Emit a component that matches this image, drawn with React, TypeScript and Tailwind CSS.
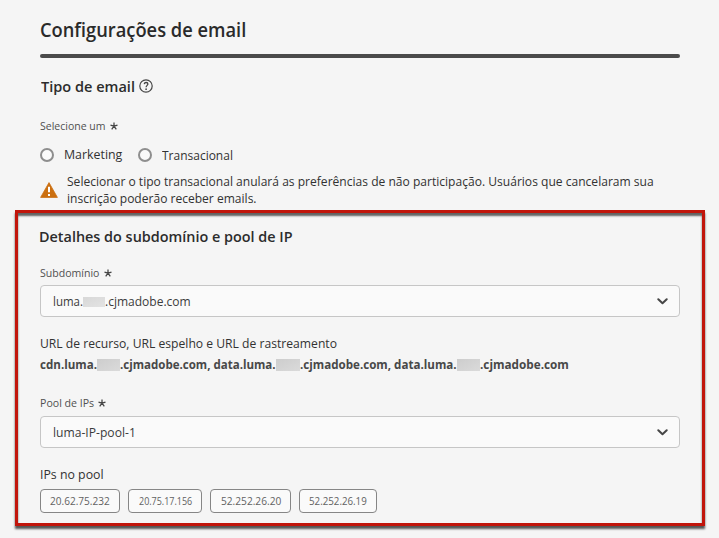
import { useLayoutEffect, useRef } from "react";
import clsx from "clsx";

/** A run of text condensed or widened to an exact advance width. */
function Fit({ w, className, children }: { w: number; className?: string; children: string }) {
  const ref = useRef<HTMLSpanElement>(null);
  useLayoutEffect(() => {
    const el = ref.current;
    if (el) el.style.transform = `scaleX(${w / el.offsetWidth})`;
  }, [w, children]);
  return (
    <span className={clsx("block shrink-0 whitespace-nowrap", className)} style={{ width: w }}>
      <span ref={ref} className="inline-block origin-left">
        {children}
      </span>
    </span>
  );
}

function Asterisk() {
  return (
    <svg className="ml-1 size-2 shrink-0" viewBox="0 0 8 8" fill="none" stroke="#444" strokeWidth="1.25">
      <path d="M4 4.2V.4M4 4.2L.5 3.1M4 4.2L7.5 3.1M4 4.2L1.7 7.4M4 4.2L6.3 7.4" />
    </svg>
  );
}

function Label({ text, w, className }: { text: string; w: number; className?: string }) {
  return (
    <div className={clsx("flex items-center text-[11px] leading-4 text-[#505050]", className)}>
      <Fit w={w}>{text}</Fit>
      <Asterisk />
    </div>
  );
}

function Radio({ text, w, className, textClass }: { text: string; w: number; className?: string; textClass?: string }) {
  return (
    <label className={clsx("flex items-center", className)}>
      <span className="mr-[10px] size-[14px] rounded-full border-2 border-[#8e8e8e] bg-[#fafafa]" />
      <Fit w={w} className={textClass}>{text}</Fit>
    </label>
  );
}

function Redacted({ className }: { className: string }) {
  return <span className={clsx("mt-px shrink-0 bg-linear-to-br", className)} />;
}

function Select({ children, className }: { children: React.ReactNode; className?: string }) {
  return (
    <div
      className={clsx(
        "flex h-8 items-center rounded-[4px] border border-[#c6c6c6] bg-[#fafafa] pr-[11px] pl-3 leading-5 text-[#3c3c3c]",
        className,
      )}
    >
      {children}
      <svg className="ml-auto h-[7px] w-[11px]" viewBox="0 0 11 7" fill="none" stroke="#464646" strokeWidth="2" strokeLinecap="round" strokeLinejoin="round">
        <path d="M1.3 1.2L5.5 5.2L9.7 1.2" />
      </svg>
    </div>
  );
}

const ips = [
  { ip: "20.62.75.232", w: 59.5, box: "w-20" },
  { ip: "20.75.17.156", w: 53, box: "w-[74px]" },
  { ip: "52.252.26.20", w: 60, box: "w-[81px]" },
  { ip: "52.252.26.19", w: 57.5, box: "w-[78px]" },
];

export default function App() {
  return (
    <main className="h-[538px] w-[719px] overflow-hidden bg-[#f5f5f5] pt-4 font-['Open_Sans',sans-serif] text-[13px] text-[#323232]">
      <div className="mx-10 w-[640px]">
        <h1 className="text-[19px] leading-7 font-semibold text-[#2a2a2a]">
          <Fit w={206}>Configurações de email</Fit>
        </h1>
        <div className="mt-[10px] h-1 rounded-full bg-[#4b4b4b]" />
        <h2 className="mt-4 flex items-center pl-px text-[15px] leading-6 font-semibold text-[#2c2c2c]">
          <Fit w={94}>Tipo de email</Fit>
          <svg className="ml-1 size-[14px]" viewBox="0 0 14 14" fill="none" stroke="#464646" strokeWidth="1.2">
            <circle cx="7" cy="7" r="6.2" />
            <path d="M5.2 5.1C5.4 4 6.2 3.5 7.1 3.5C8.2 3.5 8.9 4.2 8.9 5.1C8.9 6.3 7.1 6.6 7.1 8.3" strokeWidth="1.3" />
            <circle cx="7.1" cy="10.2" r=".85" fill="#464646" stroke="none" />
          </svg>
        </h2>
        <Label text="Selecione um" w={66} className="mt-5" />
        <div className="mt-[11px] flex h-5 items-center leading-5">
          <Radio text="Marketing" w={58} textClass="mb-0.5" />
          <Radio text="Transacional" w={71} className="ml-4" />
        </div>
        <div className="mt-2 flex leading-[17px]">
          <svg className="mt-[9px] h-4 w-[18px]" viewBox="0 0 18 16">
            <path d="M9 .6L17.4 15.4H.6Z" fill="#cb6f10" stroke="#cb6f10" strokeWidth=".8" strokeLinejoin="round" />
            <path d="M9 4.8V10.2M9 12V14" stroke="#fff" strokeWidth="2" />
          </svg>
          <div className="ml-[9px]">
            <Fit w={586.5}>
              Selecionar o tipo transacional anulará as preferências de não participação. Usuários que cancelaram sua
            </Fit>
            <Fit w={190}>inscrição poderão receber emails.</Fit>
          </div>
        </div>
      </div>

      <section className="mt-[3px] ml-[15px] h-[316px] w-[690px] border-3 border-[#c1150b] px-[22px] pt-[11px] shadow-[0_3px_2px_rgba(0,0,0,0.65),inset_0_3px_2px_rgba(0,0,0,0.6)]">
        <h2 className="-ml-px text-[15px] leading-6 font-semibold text-[#2c2c2c]">
          <Fit w={253.5}>Detalhes do subdomínio e pool de IP</Fit>
        </h2>
        <Label text="Subdomínio" w={59.5} className="mt-[17px]" />
        <Select className="mt-1">
          <Fit w={30}>luma.</Fit>
          <Redacted className="h-[10px] w-[22px] from-[#d8d8d8] to-[#e3e3e3]" />
          <Fit w={86}>.cjmadobe.com</Fit>
        </Select>
        <div className="mt-4 leading-5">
          <Fit w={297}>URL de recurso, URL espelho e URL de rastreamento</Fit>
        </div>
        <div className="mt-px flex items-center leading-5 font-bold text-[#484848]">
          <Fit w={57}>cdn.luma.</Fit>
          <Redacted className="h-3 w-[23px] from-[#cdcdcd] to-[#dadada]" />
          <Fit w={156}>.cjmadobe.com, data.luma.</Fit>
          <Redacted className="h-3 w-[24px] from-[#cdcdcd] to-[#dadada]" />
          <Fit w={157}>.cjmadobe.com, data.luma.</Fit>
          <Redacted className="h-3 w-[23px] from-[#cdcdcd] to-[#dadada]" />
          <Fit w={88.5}>.cjmadobe.com</Fit>
        </div>
        <Label text="Pool de IPs" w={54} className="mt-[21px]" />
        <Select className="mt-[5px]">
          <Fit w={83}>luma-IP-pool-1</Fit>
        </Select>
        <div className="mt-4 leading-5">
          <Fit w={63.5}>IPs no pool</Fit>
        </div>
        <div className="mt-[5px] flex gap-2">
          {ips.map(({ ip, w, box }) => (
            <span
              key={ip}
              className={clsx(
                "flex h-6 items-center justify-center rounded-[4px] border border-[#868686] bg-[#fafafa] text-[11px] leading-4 text-[#626262]",
                box,
              )}
            >
              <Fit w={w}>{ip}</Fit>
            </span>
          ))}
        </div>
      </section>
    </main>
  );
}
